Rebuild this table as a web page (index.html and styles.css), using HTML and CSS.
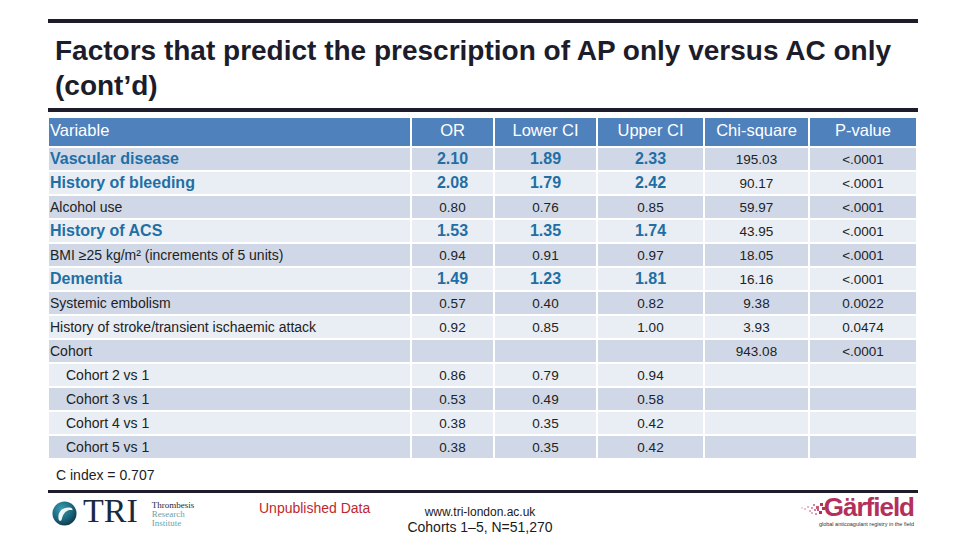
FILE: index.html
```html
<!DOCTYPE html>
<html lang="en">
<head>
<meta charset="utf-8">
<title>Factors that predict the prescription of AP only versus AC only (cont'd)</title>
<link rel="stylesheet" href="styles.css">
</head>
<body>
<div class="slide">
  <div class="rule rule-top"></div>
  <h1 class="title">Factors that predict the prescription of AP only versus AC only<br>(cont’d)</h1>
  <div class="rule rule-mid"></div>

  <div class="table">
    <div class="row head">
      <div class="cell var">Variable</div>
      <div class="cell">OR</div>
      <div class="cell">Lower CI</div>
      <div class="cell">Upper CI</div>
      <div class="cell">Chi-square</div>
      <div class="cell">P-value</div>
    </div>
    <div class="row dark key">
      <div class="cell var b">Vascular disease</div>
      <div class="cell b">2.10</div><div class="cell b">1.89</div><div class="cell b">2.33</div>
      <div class="cell">195.03</div><div class="cell">&lt;.0001</div>
    </div>
    <div class="row light key">
      <div class="cell var b">History of bleeding</div>
      <div class="cell b">2.08</div><div class="cell b">1.79</div><div class="cell b">2.42</div>
      <div class="cell">90.17</div><div class="cell">&lt;.0001</div>
    </div>
    <div class="row dark">
      <div class="cell var">Alcohol use</div>
      <div class="cell">0.80</div><div class="cell">0.76</div><div class="cell">0.85</div>
      <div class="cell">59.97</div><div class="cell">&lt;.0001</div>
    </div>
    <div class="row light key">
      <div class="cell var b">History of ACS</div>
      <div class="cell b">1.53</div><div class="cell b">1.35</div><div class="cell b">1.74</div>
      <div class="cell">43.95</div><div class="cell">&lt;.0001</div>
    </div>
    <div class="row dark">
      <div class="cell var">BMI ≥25 kg/m² (increments of 5 units)</div>
      <div class="cell">0.94</div><div class="cell">0.91</div><div class="cell">0.97</div>
      <div class="cell">18.05</div><div class="cell">&lt;.0001</div>
    </div>
    <div class="row light key">
      <div class="cell var b">Dementia</div>
      <div class="cell b">1.49</div><div class="cell b">1.23</div><div class="cell b">1.81</div>
      <div class="cell">16.16</div><div class="cell">&lt;.0001</div>
    </div>
    <div class="row dark">
      <div class="cell var">Systemic embolism</div>
      <div class="cell">0.57</div><div class="cell">0.40</div><div class="cell">0.82</div>
      <div class="cell">9.38</div><div class="cell">0.0022</div>
    </div>
    <div class="row light">
      <div class="cell var">History of stroke/transient ischaemic attack</div>
      <div class="cell">0.92</div><div class="cell">0.85</div><div class="cell">1.00</div>
      <div class="cell">3.93</div><div class="cell">0.0474</div>
    </div>
    <div class="row dark">
      <div class="cell var">Cohort</div>
      <div class="cell"></div><div class="cell"></div><div class="cell"></div>
      <div class="cell">943.08</div><div class="cell">&lt;.0001</div>
    </div>
    <div class="row light">
      <div class="cell var sub">Cohort 2 vs 1</div>
      <div class="cell">0.86</div><div class="cell">0.79</div><div class="cell">0.94</div>
      <div class="cell"></div><div class="cell"></div>
    </div>
    <div class="row dark">
      <div class="cell var sub">Cohort 3 vs 1</div>
      <div class="cell">0.53</div><div class="cell">0.49</div><div class="cell">0.58</div>
      <div class="cell"></div><div class="cell"></div>
    </div>
    <div class="row light">
      <div class="cell var sub">Cohort 4 vs 1</div>
      <div class="cell">0.38</div><div class="cell">0.35</div><div class="cell">0.42</div>
      <div class="cell"></div><div class="cell"></div>
    </div>
    <div class="row dark">
      <div class="cell var sub">Cohort 5 vs 1</div>
      <div class="cell">0.38</div><div class="cell">0.35</div><div class="cell">0.42</div>
      <div class="cell"></div><div class="cell"></div>
    </div>
  </div>

  <div class="cindex">C index = 0.707</div>
  <div class="rule rule-bottom"></div>

  <div class="footer">
    <div class="tri">
      <svg class="tri-mark" viewBox="0 0 26 26" width="25" height="25" aria-hidden="true">
        <defs>
          <radialGradient id="triG" cx="0.38" cy="0.32" r="0.75">
            <stop offset="0" stop-color="#3c9db1"/>
            <stop offset="0.55" stop-color="#1d6a80"/>
            <stop offset="1" stop-color="#0b3345"/>
          </radialGradient>
        </defs>
        <circle cx="13" cy="13" r="12.5" fill="url(#triG)"/>
        <path d="M7 19.5 C5.2 12.5 10 6 18.5 6.8 C20.5 7 21.6 8.2 21.2 9.6 C17.5 8.4 11.8 10.5 10.2 19 C9.6 21 7.6 21.3 7 19.5 Z" fill="#eef6f8"/>
      </svg>
      <span class="tri-word">TRI</span>
      <span class="tri-name">
        <span class="tn-1">Thrombesis</span>
        <span class="tn-2">Research</span>
        <span class="tn-2">Institute</span>
      </span>
    </div>
    <div class="unpub">Unpublished Data</div>
    <div class="center-info">
      <div class="url">www.tri-london.ac.uk</div>
      <div class="cohorts">Cohorts 1–5, N=51,270</div>
    </div>
    <div class="garfield">
      <div class="gf-top">
        <svg class="gf-dots" viewBox="0 0 28 22" width="28" height="22" aria-hidden="true">
          <g fill="#b4305c">
            <rect x="22" y="6" width="3" height="3"/>
            <rect x="24" y="10" width="3" height="3"/>
            <rect x="21" y="14" width="3" height="3"/>
            <rect x="18" y="9" width="3" height="3" opacity="0.8"/>
            <rect x="19" y="12" width="2" height="2" opacity="0.8"/>
            <rect x="15" y="7" width="2" height="2" opacity="0.6"/>
            <rect x="16" y="12" width="2" height="2" opacity="0.6"/>
            <rect x="13" y="10" width="2" height="2" opacity="0.5"/>
            <rect x="11" y="13" width="2" height="2" opacity="0.4"/>
            <rect x="9" y="9" width="2" height="2" opacity="0.35"/>
            <rect x="6" y="11" width="2" height="2" opacity="0.3"/>
            <rect x="3" y="10" width="2" height="2" opacity="0.2"/>
            <rect x="17" y="16" width="2" height="2" opacity="0.5"/>
            <rect x="13" y="15" width="2" height="2" opacity="0.35"/>
          </g>
        </svg>
        <span class="gf-word">Gärfield</span>
      </div>
      <div class="gf-tag">global anticoagulant registry in the field</div>
    </div>
  </div>
</div>
</body>
</html>
```

FILE: styles.css
```css
* { box-sizing: border-box; }

body {
  margin: 0;
  background: #ffffff;
  font-family: "Liberation Sans", Arial, sans-serif;
}

.slide {
  width: 960px;
  height: 540px;
  overflow: hidden;
  background: #ffffff;
}

.rule {
  margin-left: 48px;
  width: 870px;
  height: 4px;
  background: #1c1c2b;
}
.rule-top { margin-top: 19px; }
.rule-mid { margin-top: 5px; }
.rule-bottom { margin-top: 7px; height: 3px; }

.title {
  margin: 10px 0 0 55px;
  font-size: 28px;
  line-height: 35px;
  font-weight: bold;
  color: #1c1c2b;
}

/* table */
.table {
  margin: 6px 0 0 49px;
  width: 867px;
}
.row {
  display: grid;
  grid-template-columns: 361px 81px 101px 105px 103px 106px;
  column-gap: 2px;
  height: 22px;
  margin-top: 2px;
}
.row.head {
  height: 28px;
  margin-top: 0;
}
.cell {
  display: flex;
  align-items: center;
  justify-content: center;
  font-size: 13.5px;
  color: #222222;
  white-space: nowrap;
}
.cell.var {
  justify-content: flex-start;
  padding-left: 1px;
  font-size: 14px;
}
.cell.var.sub { padding-left: 17px; }

.head .cell {
  background: #4f81bd;
  color: #ffffff;
  font-size: 16.5px;
  padding-bottom: 4px;
}
.dark .cell { background: #d0d8e8; }
.light .cell { background: #e9edf4; }

.key .cell.b {
  font-weight: bold;
  font-size: 16px;
  color: #1f6fa5;
}

.cindex {
  margin: 9px 0 0 56px;
  font-size: 14px;
  line-height: 16px;
  color: #222222;
}

/* footer */
.footer {
  display: flex;
  align-items: flex-start;
  padding: 4px 46px 0 50px;
}
.tri {
  width: 209px;
  display: flex;
  align-items: flex-start;
}
.tri-mark {
  margin: 4px 0 0 2px;
  flex: none;
}
.tri-word {
  margin-left: 6px;
  font-family: "Liberation Serif", "Times New Roman", serif;
  font-size: 34px;
  line-height: 28px;
  color: #1b2940;
}
.tri-name {
  margin: 4px 0 0 14px;
  display: flex;
  flex-direction: column;
  font-family: "Liberation Serif", "Times New Roman", serif;
  font-size: 9px;
  line-height: 9px;
}
.tn-1 { color: #1b2940; }
.tn-2 { color: #6f9ea9; }

.unpub {
  width: 145px;
  margin-top: 3px;
  font-size: 14px;
  line-height: 16px;
  color: #c0282d;
  white-space: nowrap;
}

.center-info {
  width: 152px;
  margin-top: 8px;
  text-align: center;
  color: #1a1a1a;
  white-space: nowrap;
}
.url { font-size: 12px; line-height: 14px; }
.cohorts { font-size: 14px; line-height: 16px; }

.garfield {
  margin-left: auto;
  margin-top: -1px;
  display: flex;
  flex-direction: column;
  align-items: flex-end;
}
.gf-top {
  display: flex;
  align-items: flex-start;
}
.gf-dots { margin-right: -2px; margin-top: 1px; }
.gf-word {
  font-size: 26px;
  line-height: 22px;
  font-weight: bold;
  letter-spacing: -1px;
  color: #b4305c;
}
.gf-tag {
  margin-top: 2px;
  font-size: 5.5px;
  line-height: 6px;
  color: #333333;
  white-space: nowrap;
}
```
